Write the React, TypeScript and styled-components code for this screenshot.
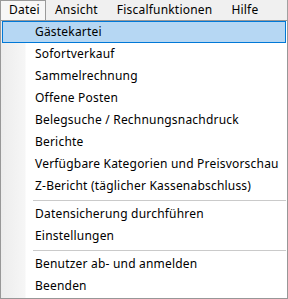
import React from "react";
import styled, { createGlobalStyle } from "styled-components";

const Global = createGlobalStyle`
  html, body { margin: 0; padding: 0; background: #ffffff; }
  body { font-family: "Segoe UI", "Noto Sans", "Open Sans", sans-serif; font-size: 12px; letter-spacing: 0.2px; color: #000; }
`;

const Frame = styled.div`
  width: 288px;
  height: 299px;
  display: flex;
  flex-direction: column;
  overflow: hidden;
`;

const MenuBar = styled.div`
  height: 20px;
  display: flex;
  align-items: stretch;
  background: #f0f0f0;
  box-sizing: border-box;
  border-right: 1px solid #a0a0a0;
`;

const MenuTitle = styled.div<{ $open?: boolean }>`
  box-sizing: border-box;
  display: flex;
  align-items: center;
  padding: 0 10px 1px ${(p) => (p.$open ? "8px" : "9px")};
  line-height: 1;
  white-space: nowrap;
  background: ${(p) => (p.$open ? "#f7f7f7" : "transparent")};
  border: ${(p) => (p.$open ? "1px solid #9a9a9a" : "none")};
  border-bottom: none;
  width: ${(p) => (p.$open ? "46px" : "auto")};
`;

const Dropdown = styled.div`
  flex: 1;
  box-sizing: border-box;
  border: 1px solid #979797;
  padding: 0 1px 1px 1px;
  background: linear-gradient(to right, #ececec 0, #f6f6f6 24px, #ffffff 25px);
  display: flex;
  flex-direction: column;
`;

const Item = styled.div<{ $active?: boolean }>`
  box-sizing: border-box;
  height: 22px;
  display: flex;
  align-items: center;
  padding-left: ${(p) => (p.$active ? "32px" : "33px")};
  padding-bottom: 1px;
  white-space: nowrap;
  background: ${(p) => (p.$active ? "#b6d7f3" : "transparent")};
  border: ${(p) => (p.$active ? "1px solid #0078d7" : "none")};
`;

const Separator = styled.div`
  height: 6px;
  display: flex;
  align-items: center;
  padding-left: 31px;
  &::after {
    content: "";
    flex: 1;
    height: 1px;
    background: #cacaca;
  }
`;

type Entry = { label: string } | { sep: true };

const entries: Entry[] = [
  { label: "Gästekartei" },
  { label: "Sofortverkauf" },
  { label: "Sammelrechnung" },
  { label: "Offene Posten" },
  { label: "Belegsuche / Rechnungsnachdruck" },
  { label: "Berichte" },
  { label: "Verfügbare Kategorien und Preisvorschau" },
  { label: "Z-Bericht (täglicher Kassenabschluss)" },
  { sep: true },
  { label: "Datensicherung durchführen" },
  { label: "Einstellungen" },
  { sep: true },
  { label: "Benutzer ab- und anmelden" },
  { label: "Beenden" },
];

export default function App() {
  return (
    <Frame>
      <Global />
      <MenuBar>
        <MenuTitle $open>Datei</MenuTitle>
        <MenuTitle>Ansicht</MenuTitle>
        <MenuTitle>Fiscalfunktionen</MenuTitle>
        <MenuTitle>Hilfe</MenuTitle>
      </MenuBar>
      <Dropdown>
        {entries.map((e, i) =>
          "sep" in e ? (
            <Separator key={i} />
          ) : (
            <Item key={i} $active={i === 0}>
              {e.label}
            </Item>
          )
        )}
      </Dropdown>
    </Frame>
  );
}
